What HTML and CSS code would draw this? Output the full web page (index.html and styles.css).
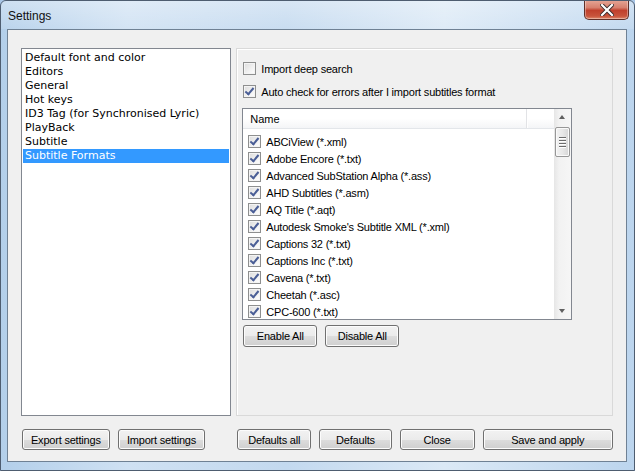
FILE: index.html
```html
<!DOCTYPE html>
<html lang="en">
<head>
    <meta charset="UTF-8">
    <title>Settings</title>
    <link rel="stylesheet" href="styles.css">
</head>
<body>

    <div class="window">
        <!-- Aero title bar -->
        <div class="titlebar">
            <span class="title">Settings</span>
            <div class="close-btn">
                <svg width="14" height="12" viewBox="0 0 14 12">
                    <path d="M2 1 L12 11 M12 1 L2 11" stroke="#3b2b2b" stroke-width="4" stroke-linecap="square"/>
                    <path d="M2 1 L12 11 M12 1 L2 11" stroke="#ffffff" stroke-width="2.2" stroke-linecap="square"/>
                </svg>
            </div>
        </div>

        <div class="client">
            <div class="panes">
                <!-- Settings sections -->
                <ul class="nav-list">
                    <li>Default font and color</li>
                    <li>Editors</li>
                    <li>General</li>
                    <li>Hot keys</li>
                    <li>ID3 Tag (for Synchronised Lyric)</li>
                    <li>PlayBack</li>
                    <li>Subtitle</li>
                    <li class="selected">Subtitle Formats</li>
                </ul>

                <!-- Subtitle formats page -->
                <div class="format-panel">
                    <div class="check-row"><span class="cb"></span>Import deep search</div>
                    <div class="check-row"><span class="cb checked"></span>Auto check for errors after I import subtitles format</div>

                    <div class="listview">
                        <div class="lv-main">
                            <div class="lv-header">
                                <div class="lv-col">Name</div>
                                <div class="lv-col-rest"></div>
                            </div>
                            <div class="lv-body">
                                <div class="lv-row"><span class="cb checked"></span>ABCiView (*.xml)</div>
                                <div class="lv-row"><span class="cb checked"></span>Adobe Encore (*.txt)</div>
                                <div class="lv-row"><span class="cb checked"></span>Advanced SubStation Alpha (*.ass)</div>
                                <div class="lv-row"><span class="cb checked"></span>AHD Subtitles (*.asm)</div>
                                <div class="lv-row"><span class="cb checked"></span>AQ Title (*.aqt)</div>
                                <div class="lv-row"><span class="cb checked"></span>Autodesk Smoke's Subtitle XML (*.xml)</div>
                                <div class="lv-row"><span class="cb checked"></span>Captions 32 (*.txt)</div>
                                <div class="lv-row"><span class="cb checked"></span>Captions Inc (*.txt)</div>
                                <div class="lv-row"><span class="cb checked"></span>Cavena (*.txt)</div>
                                <div class="lv-row"><span class="cb checked"></span>Cheetah (*.asc)</div>
                                <div class="lv-row"><span class="cb checked"></span>CPC-600 (*.txt)</div>
                            </div>
                        </div>
                        <div class="scrollbar">
                            <div class="sb-arrow up"></div>
                            <div class="sb-thumb">
                                <span></span><span></span><span></span><span></span>
                            </div>
                            <div class="sb-track"></div>
                            <div class="sb-arrow down"></div>
                        </div>
                    </div>

                    <div class="list-buttons">
                        <button class="btn btn-list">Enable All</button>
                        <button class="btn btn-list">Disable All</button>
                    </div>
                </div>
            </div>

            <!-- Dialog buttons -->
            <div class="bottom-buttons">
                <button class="btn btn-export">Export settings</button>
                <button class="btn btn-import">Import settings</button>
                <button class="btn btn-defaults-all">Defaults all</button>
                <button class="btn btn-defaults">Defaults</button>
                <button class="btn btn-close">Close</button>
                <button class="btn btn-save">Save and apply</button>
            </div>
        </div>
    </div>

</body>
</html>
```

FILE: styles.css
```css
body {
    margin: 0;
    padding: 0;
    font-family: "Liberation Sans", Arial, sans-serif;
    font-size: 11px;
    color: black;
    background: #a9c6e6;
}

.window {
    width: 635px;
    height: 471px;
    box-sizing: border-box;
    display: flex;
    flex-direction: column;
    border: 1px solid #4e5d70;
    border-radius: 6px 6px 0 0;
    background: linear-gradient(90deg, #b3cfea 0%, #cfe1f3 20%, #c3d9ef 45%, #dbe9f6 70%, #bcd5ee 100%);
    overflow: hidden;
}

/* Title bar */
.titlebar {
    height: 28px;
    display: flex;
    align-items: flex-start;
    background: linear-gradient(180deg, rgba(255,255,255,0.35) 0%, rgba(255,255,255,0.1) 100%);
}

.title {
    margin: 8px 0 0 7px;
    font-family: "Liberation Sans", Arial, sans-serif;
    font-size: 12px;
    color: #101010;
}

.close-btn {
    margin-left: auto;
    margin-right: 5px;
    margin-top: -1px;
    width: 45px;
    height: 20px;
    box-sizing: border-box;
    border: 1px solid #5f2f28;
    border-top: none;
    border-radius: 0 0 5px 5px;
    background: linear-gradient(180deg, #e6a797 0%, #d7806e 40%, #c0402c 55%, #c8543c 85%, #e08a6c 100%);
    box-shadow: inset 0 0 0 1px rgba(255,255,255,0.35);
    display: flex;
    justify-content: center;
    align-items: center;
}

/* Client area */
.client {
    flex: 1;
    margin: 0 7px 8px 6px;
    background: #f0f0f0;
    border: 1px solid #6f8194;
    padding: 18px 13px 0 13px;
    display: flex;
    flex-direction: column;
}

.panes {
    display: flex;
    height: 368px;
}

/* Left list */
.nav-list {
    list-style: none;
    margin: 0;
    padding: 2px 1px 0 1px;
    width: 211px;
    box-sizing: border-box;
    background: white;
    border: 1px solid #828790;
    font-family: "DejaVu Sans", Verdana, sans-serif;
    font-size: 11px;
}

.nav-list li {
    height: 14px;
    line-height: 14px;
    padding-left: 2px;
    white-space: nowrap;
}

.nav-list li.selected {
    background: #3399ff;
    color: white;
}

/* Right panel */
.format-panel {
    margin-left: 5px;
    width: 378px;
    box-sizing: border-box;
    border: 1px solid #d9d9d9;
    box-shadow: inset 1px 1px 0 #ffffff;
    padding: 13px 0 0 5px;
}

.check-row {
    display: flex;
    align-items: center;
    height: 13px;
    margin-bottom: 10px;
    margin-left: 1px;
    letter-spacing: -0.2px;
    white-space: nowrap;
}

.check-row .cb {
    margin-right: 5px;
}

/* Checkbox */
.cb {
    position: relative;
    display: inline-block;
    flex: none;
    width: 13px;
    height: 13px;
    box-sizing: border-box;
    border: 1px solid #8e8f8f;
    background: linear-gradient(135deg, #dcdcdc 0%, #f2f2f2 60%, #ffffff 100%);
    box-shadow: inset 0 0 0 1px #f4f4f4;
}

.cb.checked::after {
    content: "";
    position: absolute;
    left: 3px;
    top: 0px;
    width: 3px;
    height: 7px;
    border-right: 2px solid #4a5e96;
    border-bottom: 2px solid #4a5e96;
    transform: rotate(40deg);
}

/* List view */
.listview {
    margin-top: 9px;
    width: 330px;
    height: 212px;
    box-sizing: border-box;
    border: 1px solid #828790;
    background: white;
    display: flex;
}

.lv-main {
    flex: 1;
    overflow: hidden;
}

.lv-header {
    display: flex;
    height: 19px;
    border-bottom: 1px solid #e3e6ea;
    background: linear-gradient(180deg, #ffffff 0%, #ffffff 50%, #f4f5f7 100%);
}

.lv-col {
    width: 276px;
    padding-left: 7px;
    line-height: 20px;
    border-right: 1px solid #e2e3e6;
    box-shadow: 1px 0 0 #ffffff;
}

.lv-col-rest {
    flex: 1;
}

.lv-body {
    padding-top: 4px;
}

.lv-row {
    display: flex;
    align-items: center;
    height: 17px;
    padding-left: 5px;
    letter-spacing: -0.2px;
    white-space: nowrap;
}

.lv-row .cb {
    margin-right: 5px;
}

/* Scroll bar */
.scrollbar {
    width: 17px;
    display: flex;
    flex-direction: column;
    background: linear-gradient(90deg, #e6e6e6 0%, #f2f2f2 30%, #f6f6f6 100%);
}

.sb-arrow {
    height: 17px;
    position: relative;
}

.sb-arrow::after {
    content: "";
    position: absolute;
    left: 5px;
    width: 0;
    height: 0;
    border-left: 3.5px solid transparent;
    border-right: 3.5px solid transparent;
}

.sb-arrow.up::after {
    top: 6px;
    border-bottom: 4px solid #606060;
}

.sb-arrow.down::after {
    top: 7px;
    border-top: 4px solid #606060;
}

.sb-thumb {
    margin: 1px 1px 0 1px;
    height: 30px;
    box-sizing: border-box;
    border: 1px solid #979797;
    border-radius: 2px;
    background: linear-gradient(90deg, #f3f3f3 0%, #e8e8e8 50%, #d6d6d6 100%);
    box-shadow: inset 0 0 0 1px #fafafa;
    display: flex;
    flex-direction: column;
    align-items: center;
    justify-content: center;
    gap: 2px;
}

.sb-thumb span {
    display: block;
    width: 7px;
    height: 1px;
    background: #6c6c6c;
    box-shadow: 0 1px 0 #ffffff;
}

.sb-track {
    flex: 1;
}

/* Buttons */
.btn {
    font-family: "Liberation Sans", Arial, sans-serif;
    font-size: 11px;
    letter-spacing: -0.2px;
    color: black;
    height: 21px;
    padding: 0;
    border: 1px solid #707070;
    border-radius: 3px;
    background: linear-gradient(180deg, #f2f2f2 0%, #ebebeb 50%, #dddddd 51%, #cfcfcf 100%);
    box-shadow: inset 0 0 0 1px #fcfcfc;
}

.list-buttons {
    display: flex;
    gap: 8px;
    margin-top: 5px;
    margin-left: 1px;
}

.btn-list {
    width: 74px;
    height: 22px;
}

.bottom-buttons {
    display: flex;
    margin-top: 13px;
    padding-left: 1px;
}

.btn-export { width: 88px; }
.btn-import { width: 88px; margin-left: 8px; }
.btn-defaults-all { width: 74px; margin-left: 32px; }
.btn-defaults { width: 73px; margin-left: 8px; }
.btn-close { width: 75px; margin-left: 8px; }
.btn-save { width: 131px; margin-left: 8px; }
```
